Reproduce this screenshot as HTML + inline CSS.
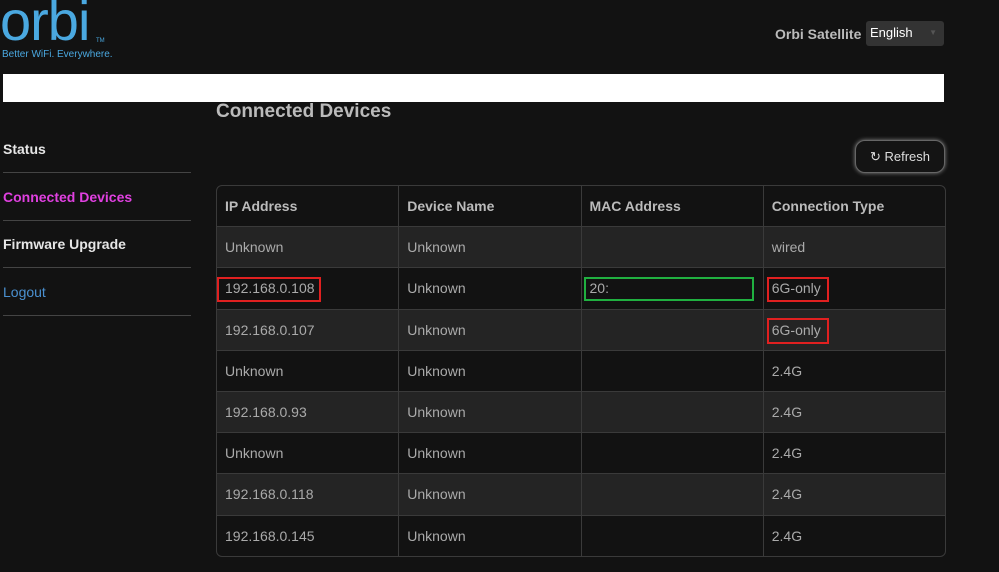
<!DOCTYPE html>
<html><head><style>
body{margin:0;width:999px;height:572px;background:#121212;font-family:"Liberation Sans",sans-serif;position:relative;overflow:hidden}
.a{position:absolute}
.logo{left:0px;top:-12px;font-size:56px;color:#4aa8e0;letter-spacing:-1px}
.tag{left:2px;top:49px;font-size:10px;color:#4aa8e0}
.nav{left:3px;font-size:14px;font-weight:bold;color:#e6e6e6}
.ln{left:3px;width:188px;height:1px;background:#444}
table{position:absolute;left:216px;top:185px;width:730px;border-collapse:separate;border-spacing:0;border:1px solid #3a3a3a;border-radius:6px;overflow:hidden;font-size:14px;color:#aaa}
td,th{height:40.2px;padding:0 0 0 8px;text-align:left;border-right:1px solid #3a3a3a;border-top:1px solid #3a3a3a;width:173px}
th{border-top:none;font-weight:bold;color:#bbb}
td:last-child,th:last-child{border-right:none}
tr:nth-child(even) td{background:#242424}
</style></head><body>
<div class="a logo">orbi</div><div class="a" style="left:96px;top:38px;font-size:6px;color:#4aa8e0">TM</div>
<div class="a tag">Better WiFi. Everywhere.</div>
<div class="a" style="left:775px;top:26px;font-size:14px;color:#bbb;font-weight:bold">Orbi Satellite</div>
<div class="a" style="left:866px;top:21px;width:78px;height:25px;background:#333;border-radius:3px;font-size:13px;color:#fff;line-height:24px;text-indent:4px">English<span style="position:absolute;right:7px;top:0;color:#555;font-size:8px">▼</span></div>
<div class="a" style="left:3px;top:74px;width:941px;height:28px;background:#fff"></div>
<div class="a" style="left:216px;top:101px;font-size:19px;font-weight:bold;color:#bbb">Connected Devices</div>
<div class="a" style="left:855px;top:140px;width:88px;height:31px;border:1px solid #666;border-radius:10px;box-shadow:0 0 4px #888;color:#ddd;font-size:13px;line-height:31px;text-align:center;background:#141414">↻ Refresh</div>
<div class="a nav" style="top:141px">Status</div><div class="a ln" style="top:172px"></div>
<div class="a nav" style="top:189px;color:#e040e0">Connected Devices</div><div class="a ln" style="top:220px"></div>
<div class="a nav" style="top:236px">Firmware Upgrade</div><div class="a ln" style="top:267px"></div>
<div class="a nav" style="top:284px;color:#4a90d0;font-weight:normal">Logout</div><div class="a ln" style="top:315px"></div>
<table>
<tr><th>IP Address</th><th>Device Name</th><th>MAC Address</th><th>Connection Type</th></tr>
<tr><td>Unknown</td><td>Unknown</td><td></td><td>wired</td></tr>
<tr><td>192.168.0.108</td><td>Unknown</td><td>20:</td><td>6G-only</td></tr>
<tr><td>192.168.0.107</td><td>Unknown</td><td></td><td>6G-only</td></tr>
<tr><td>Unknown</td><td>Unknown</td><td></td><td>2.4G</td></tr>
<tr><td>192.168.0.93</td><td>Unknown</td><td></td><td>2.4G</td></tr>
<tr><td>Unknown</td><td>Unknown</td><td></td><td>2.4G</td></tr>
<tr><td>192.168.0.118</td><td>Unknown</td><td></td><td>2.4G</td></tr>
<tr><td>192.168.0.145</td><td>Unknown</td><td></td><td>2.4G</td></tr>
</table>
<div class="a" style="left:217px;top:277px;width:100px;height:21px;border:2px solid #e02020"></div>
<div class="a" style="left:584px;top:277px;width:166px;height:20px;border:2px solid #20b040"></div>
<div class="a" style="left:767px;top:277px;width:58px;height:21px;border:2px solid #e02020"></div>
<div class="a" style="left:767px;top:318px;width:58px;height:22px;border:2px solid #e02020"></div>
</body></html>
